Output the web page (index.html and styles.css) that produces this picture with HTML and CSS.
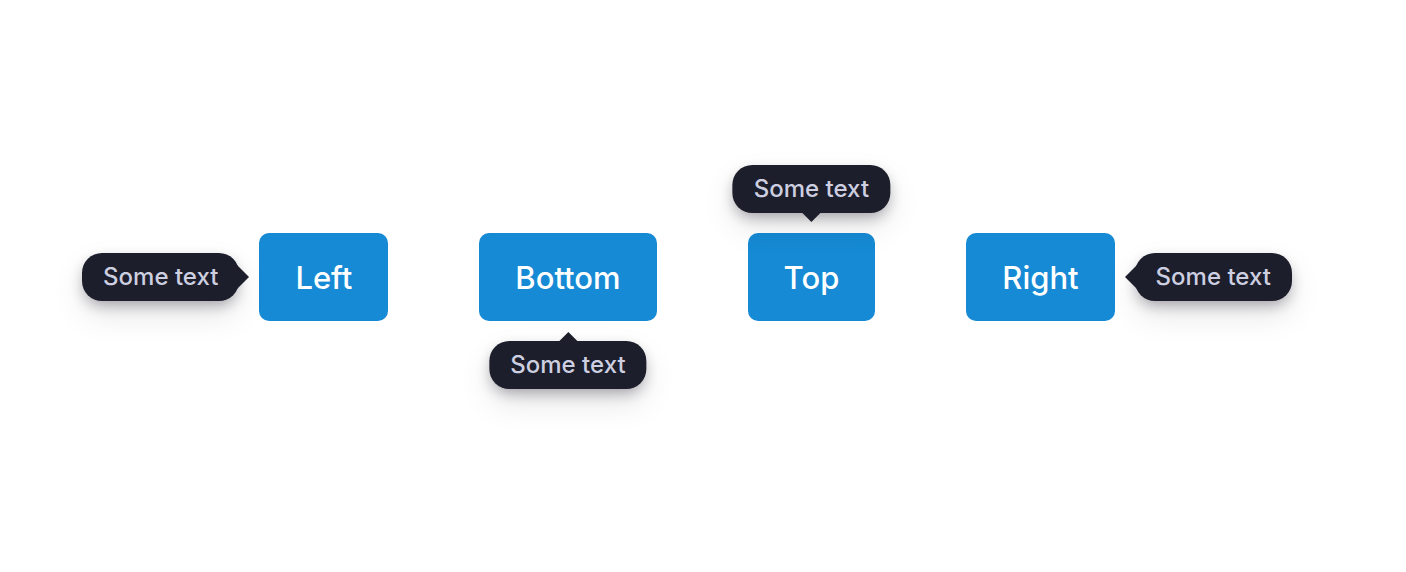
FILE: index.html
```html
<!DOCTYPE html>
<html lang="en">
<head>
<meta charset="utf-8">
<meta name="viewport" content="width=device-width, initial-scale=1">
<title>Tooltips</title>
<link rel="stylesheet" href="styles.css">
</head>
<body>
<main class="demo">
  <div class="anchor"><button class="button" type="button" aria-describedby="tip-left">Left</button><span class="tooltip tooltip-left" role="tooltip" id="tip-left">Some text</span></div>
  <div class="anchor"><button class="button" type="button" aria-describedby="tip-bottom">Bottom</button><span class="tooltip tooltip-bottom" role="tooltip" id="tip-bottom">Some text</span></div>
  <div class="anchor"><button class="button" type="button" aria-describedby="tip-top">Top</button><span class="tooltip tooltip-top" role="tooltip" id="tip-top">Some text</span></div>
  <div class="anchor"><button class="button" type="button" aria-describedby="tip-right">Right</button><span class="tooltip tooltip-right" role="tooltip" id="tip-right">Some text</span></div>
</main>
</body>
</html>
```
FILE: styles.css
```css
* {
  box-sizing: border-box;
}

body {
  margin: 0;
  background: #fff;
  font-family: Inter, "Liberation Sans", sans-serif;
}

.demo {
  display: flex;
  justify-content: center;
  align-items: center;
  gap: 91px;
  min-height: 100vh;
  padding: 0 32px 18px 0;
}

.anchor {
  position: relative;
}

.button {
  display: block;
  padding: 25px 36px 23px;
  border: 0;
  border-radius: 10px;
  background: #168ad4;
  color: #fff;
  font: 500 31px/40px Inter, "Liberation Sans", sans-serif;
}

.tooltip {
  position: absolute;
  padding: 8px 21px;
  border-radius: 20px;
  background: #1c1e2b;
  color: #cdcfe0;
  font-size: 24px;
  font-weight: 500;
  line-height: 32px;
  white-space: nowrap;
  box-shadow: 0 14px 32px rgba(0, 0, 0, 0.1), 0 6px 14px -2px rgba(20, 10, 30, 0.32);
}

.tooltip::after {
  content: "";
  position: absolute;
  border: 12px solid transparent;
}

.tooltip-left,
.tooltip-right {
  top: 50%;
  transform: translateY(-50%);
}

.tooltip-left {
  right: calc(100% + 20px);
}

.tooltip-right {
  left: calc(100% + 20px);
}

.tooltip-top,
.tooltip-bottom {
  left: 50%;
  transform: translateX(-50%);
}

.tooltip-top {
  bottom: calc(100% + 20px);
}

.tooltip-bottom {
  top: calc(100% + 20px);
}

.tooltip-left::after {
  top: calc(50% - 12px);
  left: calc(100% - 2px);
  border-left-color: #1c1e2b;
}

.tooltip-right::after {
  top: calc(50% - 12px);
  right: calc(100% - 2px);
  border-right-color: #1c1e2b;
}

.tooltip-top::after {
  top: calc(100% - 3px);
  left: calc(50% - 12px);
  border-top-color: #1c1e2b;
}

.tooltip-bottom::after {
  bottom: calc(100% - 3px);
  left: calc(50% - 12px);
  border-bottom-color: #1c1e2b;
}
```
